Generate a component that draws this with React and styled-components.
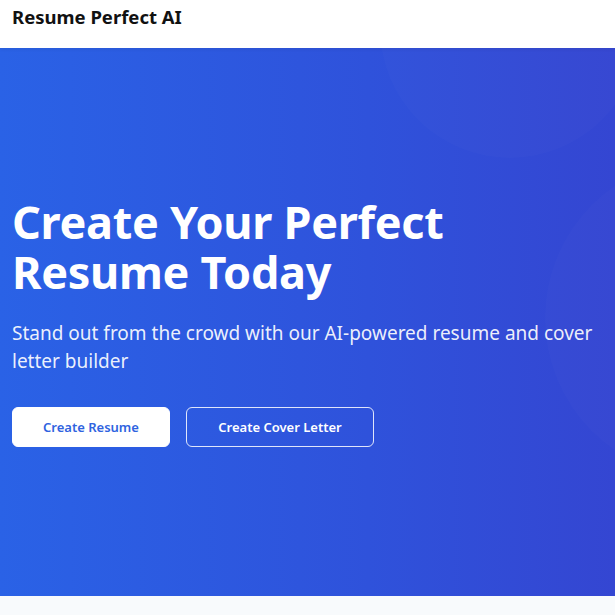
import React from "react";
import styled, { createGlobalStyle } from "styled-components";

const Global = createGlobalStyle`
  html, body { margin: 0; padding: 0; background: #f8fafc; }
  body { font-family: "Noto Sans", "Open Sans", sans-serif; }
  * { box-sizing: border-box; }
`;

const Header = styled.header`
  height: 48px;
  background: #ffffff;
  box-shadow: 0 1px 4px rgba(0,0,0,0.07);
  padding: 3px 12px 0;
  position: relative;
  z-index: 2;
`;

const Brand = styled.h1`
  margin: 0;
  font-size: 18.5px;
  line-height: 28px;
  font-weight: 700;
  color: #111;
`;

const Hero = styled.section`
  position: relative;
  overflow: hidden;
  height: 548px;
  background: linear-gradient(90deg, #2a62e6 0%, #2f52db 60%, #3446d2 100%);
  display: flex;
  flex-direction: column;
  justify-content: center;
  padding: 0 12px;
`;

const Blob = styled.div`
  position: absolute;
  border-radius: 50%;
  background: rgba(255,255,255,0.015);
  pointer-events: none;
`;

const Content = styled.div`
  position: relative;
  z-index: 1;
  margin-top: 0px;
`;

const Title = styled.h2`
  margin: 0 0 22px;
  font-size: 45px;
  line-height: 50px;
  font-weight: 700;
  color: #fff;
  letter-spacing: -0.3px;
`;

const Subtitle = styled.p`
  margin: 0 0 32px;
  font-size: 19px;
  line-height: 28px;
  color: rgba(255,255,255,0.92);
`;

const Actions = styled.div`
  display: flex;
  gap: 16px;
`;

const Button = styled.button`
  height: 40px;
  width: ${p => p.$w}px;
  border-radius: 6px;
  font-family: inherit;
  font-size: 13px;
  font-weight: 600;
  cursor: pointer;
  background: ${p => (p.$primary ? "#fff" : "transparent")};
  color: ${p => (p.$primary ? "#2f63e0" : "#fff")};
  border: 1px solid ${p => (p.$primary ? "#fff" : "rgba(255,255,255,0.85)")};
`;

const Below = styled.div`
  height: 40px;
  background: #f8fafc;
`;

export default function App() {
  return (
    <>
      <Global />
      <Header>
        <Brand>Resume Perfect AI</Brand>
      </Header>
      <Hero>
        <Blob style={{ width: 260, height: 260, left: 380, top: -150 }} />
        <Blob style={{ width: 320, height: 320, left: 545, top: 110 }} />
        <Content>
          <Title>
            Create Your Perfect
            <br />
            Resume Today
          </Title>
          <Subtitle>
            Stand out from the crowd with our AI-powered resume and cover letter builder
          </Subtitle>
          <Actions>
            <Button $primary $w={158}>Create Resume</Button>
            <Button $w={188}>Create Cover Letter</Button>
          </Actions>
        </Content>
      </Hero>
      <Below />
    </>
  );
}
